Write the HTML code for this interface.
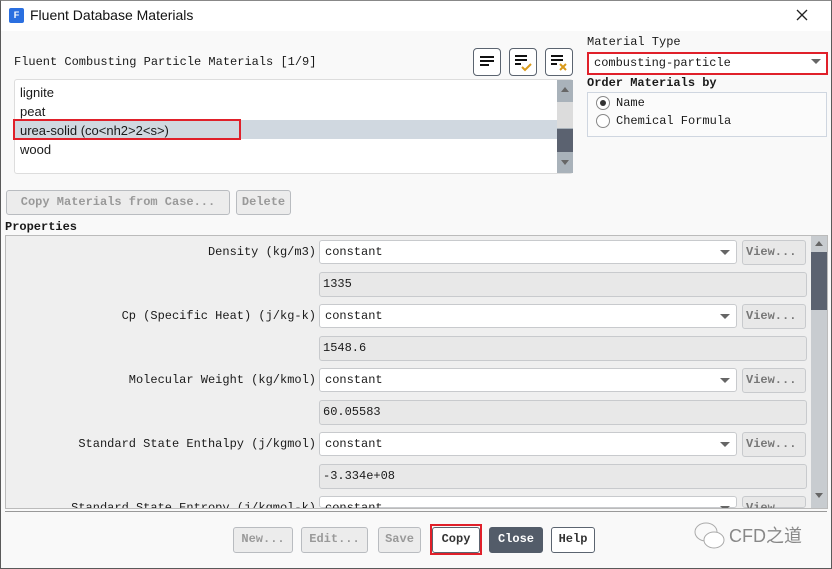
<!DOCTYPE html>
<html><head><meta charset="utf-8"><style>
*{box-sizing:border-box;margin:0;padding:0}
body{width:832px;height:569px;overflow:hidden;background:#f9f9f9;position:relative;font-family:"Liberation Mono","Noto Sans CJK SC",monospace;font-size:12px;color:#1a1a1a}
.abs{position:absolute}
.win{position:absolute;left:0;top:0;width:832px;height:569px;border:1px solid #5a5a5a;border-top-color:#888}
.title{position:absolute;left:1px;top:1px;width:830px;height:30px;background:#fff}
.btn{position:absolute;border:1px solid #b9bcc0;border-radius:3px;background:#ececec;color:#999;font-weight:bold;font-size:12px;text-align:center;line-height:23px;font-family:"Liberation Mono",monospace}
.dd{position:absolute;background:#fff;border:1px solid #c8cacd;border-radius:3px;height:24px;line-height:22px;padding-left:5px}
.dd:after{content:"";position:absolute;right:6px;top:9px;border-left:5px solid transparent;border-right:5px solid transparent;border-top:5px solid #666}
.tf{position:absolute;background:#e8e8e8;border:1px solid #c8cacd;border-radius:3px;height:25px;line-height:23px;padding-left:3px}
.lbl{position:absolute;right:516px;text-align:right;white-space:nowrap}
.view{position:absolute;left:742px;width:64px;height:25px;border:1px solid #c8cacd;border-radius:3px;background:#e8e8e8;color:#777;line-height:23px;padding-left:3px;font-weight:bold}
.ib{position:absolute;top:48px;width:28px;height:28px;border:1px solid #5b6470;border-radius:4px;background:#fff}
</style></head><body>
<div class="win"></div>
<div class="title"></div>
<div class="abs" style="left:9px;top:8px;width:15px;height:15px;background:#2a6fe0;border-radius:2px;color:#fff;font:bold 9px 'Liberation Sans',sans-serif;text-align:center;line-height:15px">F</div>
<div class="abs" style="left:30px;top:7px;font:14px 'Liberation Sans','Noto Sans CJK SC',sans-serif;color:#111">Fluent Database Materials</div>
<svg class="abs" style="left:795px;top:8px" width="14" height="14"><path d="M2 2L12 12M12 2L2 12" stroke="#222" stroke-width="1.3"/></svg>

<div class="abs" style="left:14px;top:55px">Fluent Combusting Particle Materials [1/9]</div>
<div class="ib" style="left:473px"><svg width="26" height="26"><path d="M6 8h14M6 12h14M6 16h9" stroke="#111" stroke-width="2"/></svg></div>
<div class="ib" style="left:509px"><svg width="26" height="26"><path d="M5 7h12M5 11h12M5 15h6" stroke="#111" stroke-width="2"/><path d="M12 18l3 3 6-6" stroke="#d99a1a" stroke-width="2" fill="none"/></svg></div>
<div class="ib" style="left:545px"><svg width="26" height="26"><path d="M5 7h12M5 11h12M5 15h6" stroke="#111" stroke-width="2"/><path d="M14 15l6 6M20 15l-6 6" stroke="#d99a1a" stroke-width="2"/></svg></div>

<div class="abs" style="left:14px;top:79px;width:559px;height:95px;background:#fff;border:1px solid #ddd;border-radius:3px;font:13px 'Liberation Sans',sans-serif">
 <div class="abs" style="left:0;top:40px;width:542px;height:19px;background:#d0d8e0"></div>
 <div class="abs" style="left:5px;top:3px;line-height:19px">lignite<br>peat<br>urea-solid (co&lt;nh2&gt;2&lt;s&gt;)<br>wood</div>
 <div class="abs" style="left:542px;top:0;width:16px;height:93px;background:#a9b2ba"></div>
 <div class="abs" style="left:542px;top:22px;width:16px;height:26px;background:#dcdcdc"></div>
 <div class="abs" style="left:542px;top:49px;width:16px;height:23px;background:#5b6270"></div>
 <div class="abs" style="left:546px;top:7px;border-left:4px solid transparent;border-right:4px solid transparent;border-bottom:5px solid #666"></div>
 <div class="abs" style="left:546px;top:80px;border-left:4px solid transparent;border-right:4px solid transparent;border-top:5px solid #666"></div>
</div>
<div class="abs" style="left:13px;top:119px;width:228px;height:21px;border:2px solid #e0202a"></div>

<div class="abs" style="left:587px;top:35px">Material Type</div>
<div class="abs" style="left:587px;top:52px;width:241px;height:23px;border:2px solid #e0202a;background:#fff;padding-left:5px;line-height:19px">combusting-particle</div>
<div class="abs" style="left:811px;top:59px;border-left:5px solid transparent;border-right:5px solid transparent;border-top:5px solid #666"></div>
<div class="abs" style="left:587px;top:76px;font-weight:bold">Order Materials by</div>
<div class="abs" style="left:587px;top:92px;width:240px;height:45px;border:1px solid #cfd6e0;background:#fbfbfb"></div>
<div class="abs" style="left:596px;top:96px;width:14px;height:14px;border:1px solid #888;border-radius:50%;background:#fff"><div style="margin:3px;width:6px;height:6px;border-radius:50%;background:#333"></div></div>
<div class="abs" style="left:596px;top:114px;width:14px;height:14px;border:1px solid #888;border-radius:50%;background:#fff"></div>
<div class="abs" style="left:616px;top:96px">Name</div>
<div class="abs" style="left:616px;top:114px">Chemical Formula</div>

<div class="btn" style="left:6px;top:190px;width:224px;height:25px">Copy Materials from Case...</div>
<div class="btn" style="left:236px;top:190px;width:55px;height:25px">Delete</div>
<div class="abs" style="left:5px;top:220px;font-weight:bold">Properties</div>

<div class="abs" style="left:5px;top:235px;width:823px;height:274px;background:#efefef;border:1px solid #bbb;overflow:hidden">
 <div class="abs" style="left:805px;top:0;width:16px;height:272px;background:#c8ccd0"></div>
 <div class="abs" style="left:805px;top:16px;width:16px;height:58px;background:#5b6270"></div>
 <div class="abs" style="left:809px;top:5px;border-left:4px solid transparent;border-right:4px solid transparent;border-bottom:5px solid #666"></div>
 <div class="abs" style="left:809px;top:257px;border-left:4px solid transparent;border-right:4px solid transparent;border-top:5px solid #666"></div>
</div>
<div class="abs" style="left:5px;top:236px;width:806px;height:272px;overflow:hidden">
 <div style="position:absolute;left:-5px;top:-236px;width:832px;height:508px">
  <div class="lbl" style="top:245px">Density (kg/m3)</div>
  <div class="dd" style="left:319px;top:240px;width:418px">constant</div><div class="view" style="top:240px">View...</div>
  <div class="tf" style="left:319px;top:272px;width:488px">1335</div>
  <div class="lbl" style="top:309px">Cp (Specific Heat) (j/kg-k)</div>
  <div class="dd" style="left:319px;top:304px;width:418px">constant</div><div class="view" style="top:304px">View...</div>
  <div class="tf" style="left:319px;top:336px;width:488px">1548.6</div>
  <div class="lbl" style="top:373px">Molecular Weight (kg/kmol)</div>
  <div class="dd" style="left:319px;top:368px;width:418px">constant</div><div class="view" style="top:368px">View...</div>
  <div class="tf" style="left:319px;top:400px;width:488px">60.05583</div>
  <div class="lbl" style="top:437px">Standard State Enthalpy (j/kgmol)</div>
  <div class="dd" style="left:319px;top:432px;width:418px">constant</div><div class="view" style="top:432px">View...</div>
  <div class="tf" style="left:319px;top:464px;width:488px">-3.334e+08</div>
  <div class="lbl" style="top:501px">Standard State Entropy (j/kgmol-k)</div>
  <div class="dd" style="left:319px;top:496px;width:418px;height:12px">constant</div><div class="view" style="top:496px;height:12px">View...</div>
 </div>
</div>
<div class="abs" style="left:5px;top:511px;width:822px;height:1px;background:#999"></div>

<div class="btn" style="left:233px;top:527px;width:60px;height:26px">New...</div>
<div class="btn" style="left:301px;top:527px;width:67px;height:26px">Edit...</div>
<div class="btn" style="left:378px;top:527px;width:43px;height:26px">Save</div>
<div class="abs" style="left:430px;top:524px;width:52px;height:31px;border:2px solid #e0202a"></div>
<div class="btn" style="left:432px;top:527px;width:48px;height:26px;background:#fff;border-color:#5b6470;color:#333">Copy</div>
<div class="btn" style="left:489px;top:527px;width:54px;height:26px;background:#535c69;border-color:#535c69;color:#fff">Close</div>
<div class="btn" style="left:551px;top:527px;width:44px;height:26px;background:#fff;border-color:#5b6470;color:#333">Help</div>

<svg class="abs" style="left:693px;top:521px" width="34" height="30"><ellipse cx="13" cy="11" rx="11" ry="9" fill="none" stroke="#aaa"/><ellipse cx="21" cy="19" rx="10" ry="8" fill="#fff" stroke="#aaa"/></svg>
<div class="abs" style="left:729px;top:522px;font:18px 'Liberation Sans','Noto Sans CJK SC',sans-serif;color:#888">CFD之道</div>
</body></html>
